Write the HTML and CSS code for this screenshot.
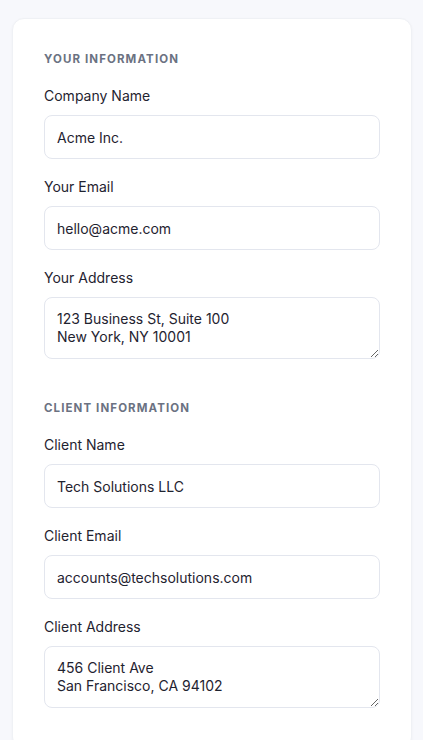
FILE: index.html
```html
<!DOCTYPE html>
<html lang="en">
<head>
<meta charset="utf-8">
<title>Invoice details</title>
<link rel="stylesheet" href="styles.css">
</head>
<body>
<main class="card">
  <section class="section">
    <h2 class="section-title">Your Information</h2>
    <div class="field">
      <label class="label" for="company">Company Name</label>
      <input class="input" id="company" type="text" value="Acme Inc.">
    </div>
    <div class="field">
      <label class="label" for="email">Your Email</label>
      <input class="input" id="email" type="email" value="hello@acme.com">
    </div>
    <div class="field">
      <label class="label" for="address">Your Address</label>
      <textarea class="input textarea" id="address" rows="2">123 Business St, Suite 100
New York, NY 10001</textarea>
    </div>
  </section>
  <section class="section">
    <h2 class="section-title">Client Information</h2>
    <div class="field">
      <label class="label" for="cname">Client Name</label>
      <input class="input" id="cname" type="text" value="Tech Solutions LLC">
    </div>
    <div class="field">
      <label class="label" for="cemail">Client Email</label>
      <input class="input" id="cemail" type="email" value="accounts@techsolutions.com">
    </div>
    <div class="field">
      <label class="label" for="caddress">Client Address</label>
      <textarea class="input textarea" id="caddress" rows="2">456 Client Ave
San Francisco, CA 94102</textarea>
    </div>
  </section>
</main>
</body>
</html>
```

FILE: styles.css
```css
* { box-sizing: border-box; }
html, body { margin: 0; padding: 0; }
body {
  background: #f7f8fc;
  font-family: "Inter", "Noto Sans", "Liberation Sans", sans-serif;
  color: #1f2330;
}
.card {
  margin: 18px 11px 0 12px;
  background: #ffffff;
  border-radius: 12px;
  border: 1px solid #eff1f5;
  box-shadow: 0 1px 3px rgba(20, 30, 60, 0.04);
  padding: 31px 31px 40px;
  display: flex;
  flex-direction: column;
  gap: 40px;
}
.section {
  display: flex;
  flex-direction: column;
  gap: 18px;
}
.section-title {
  margin: 0;
  font-size: 11.5px;
  line-height: 18px;
  font-weight: 700;
  letter-spacing: 1.1px;
  text-transform: uppercase;
  color: #6b7282;
}
.field {
  display: flex;
  flex-direction: column;
  gap: 9px;
}
.label {
  font-size: 14px;
  line-height: 20px;
  font-weight: 400;
  color: #1f2330;
}
.input {
  display: block;
  width: 100%;
  height: 44px;
  border: 1px solid #e3e6ee;
  border-radius: 8px;
  padding: 12px 12px;
  font-family: inherit;
  font-size: 14px;
  line-height: 18px;
  color: #1f2330;
  background: #ffffff;
  outline: none;
}
.textarea {
  height: 62px;
  resize: vertical;
  overflow: hidden;
}
```
